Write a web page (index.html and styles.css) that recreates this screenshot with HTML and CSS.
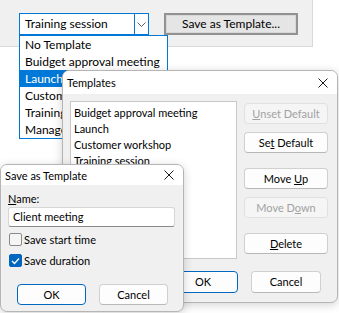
FILE: index.html
```html
<!DOCTYPE html>
<html lang="en">
<head>
    <meta charset="UTF-8">
    <title>Templates</title>
    <link rel="stylesheet" href="styles.css">
</head>
<body>

<div class="toolbar">
    <div class="combo">
        <span class="combo-text">Training session</span>
        <span class="combo-arrow">
            <svg width="9" height="5" viewBox="0 0 9 5"><path d="M0.5 0.5 L4.5 4.5 L8.5 0.5" fill="none" stroke="#606060" stroke-width="1"/></svg>
        </span>
    </div>
    <div class="classic-btn">Save as Template...</div>
</div>

<ul class="dropdown">
    <li>No Template</li>
    <li>Buidget approval meeting</li>
    <li class="selected">Launch</li>
    <li>Customer workshop</li>
    <li>Training session</li>
    <li>Manager meeting</li>
</ul>

<div class="dialog templates">
    <div class="titlebar">
        <span>Templates</span>
        <svg class="close" width="10" height="10" viewBox="0 0 10 10"><path d="M0.5 0.5 L9.5 9.5 M9.5 0.5 L0.5 9.5" stroke="#1a1a1a" stroke-width="1"/></svg>
    </div>
    <div class="dialog-body">
        <div class="tpl-main">
            <ul class="listbox">
                <li>Buidget approval meeting</li>
                <li>Launch</li>
                <li>Customer workshop</li>
                <li>Training session</li>
            </ul>
            <div class="side-buttons">
                <div class="btn disabled"><u>U</u>nset Default</div>
                <div class="btn">Se<u>t</u> Default</div>
                <div class="btn group">Move <u>U</u>p</div>
                <div class="btn disabled">Move D<u>o</u>wn</div>
                <div class="btn group"><u>D</u>elete</div>
            </div>
        </div>
        <div class="footer">
            <div class="btn wide default">OK</div>
            <div class="btn wide">Cancel</div>
        </div>
    </div>
</div>

<div class="dialog save">
    <div class="titlebar">
        <span>Save as Template</span>
        <svg class="close" width="10" height="10" viewBox="0 0 10 10"><path d="M0.5 0.5 L9.5 9.5 M9.5 0.5 L0.5 9.5" stroke="#1a1a1a" stroke-width="1"/></svg>
    </div>
    <div class="dialog-body">
        <div class="label"><u>N</u>ame:</div>
        <div class="textbox">Client meeting</div>
        <div class="check-row">
            <span class="checkbox"></span>
            <span>Save start time</span>
        </div>
        <div class="check-row">
            <span class="checkbox checked">
                <svg width="9" height="8" viewBox="0 0 9 8"><path d="M1 4 L3.5 6.5 L8 1.5" fill="none" stroke="#fff" stroke-width="1.3"/></svg>
            </span>
            <span>Save duration</span>
        </div>
        <div class="footer">
            <div class="btn wide default">OK</div>
            <div class="btn wide">Cancel</div>
        </div>
    </div>
</div>

</body>
</html>
```

FILE: styles.css
```css
* {
    box-sizing: border-box;
}

body {
    margin: 0;
    width: 339px;
    height: 313px;
    position: relative;
    overflow: hidden;
    background-color: #ffffff;
    font-family: Lato, "Noto Sans", sans-serif;
    font-size: 11px;
    color: #000000;
}

ul {
    list-style: none;
    margin: 0;
    padding: 0;
}

/* top strip with the combo box */
.toolbar {
    width: 313px;
    height: 47px;
    background-color: #f0f0f0;
    border-right: 1px solid #d9d9d9;
    border-bottom: 1px solid #d9d9d9;
    display: flex;
    align-items: flex-start;
    padding: 13px 0 0 19px;
}

.combo {
    width: 130px;
    height: 22px;
    background-color: #ffffff;
    border: 1px solid #0078d7;
    display: flex;
    font-size: 12px;
}

.combo-text {
    flex: 1;
    padding-left: 5px;
    line-height: 20px;
}

.combo-arrow {
    width: 14px;
    border-left: 1px solid #0078d7;
    display: flex;
    align-items: center;
    justify-content: center;
}

.classic-btn {
    width: 134px;
    height: 22px;
    margin-left: 15px;
    background-color: #e5e5e5;
    border: 2px solid #929292;
    box-shadow: inset 0 0 0 1px #d8d8d8;
    text-align: center;
    line-height: 18px;
    font-size: 12px;
}

/* open list of the combo box */
.dropdown {
    position: absolute;
    left: 19px;
    top: 35px;
    width: 149px;
    height: 104px;
    background-color: #ffffff;
    border: 1px solid #0078d7;
    font-size: 12px;
    overflow: hidden;
}

.dropdown li {
    height: 17px;
    line-height: 17px;
    padding-left: 5px;
    white-space: nowrap;
}

.dropdown .selected {
    background-color: #0078d7;
    color: #ffffff;
}

/* windows */
.dialog {
    position: absolute;
    background-color: #f0f0f0;
    border: 1px solid #b5b5b5;
    border-radius: 7px;
    overflow: hidden;
    box-shadow: 0 2px 10px rgba(0, 0, 0, 0.18);
}

.titlebar {
    background-color: #ffffff;
    display: flex;
    align-items: center;
    justify-content: space-between;
    padding: 0 9px 0 4px;
}

.templates {
    left: 62px;
    top: 70px;
    width: 276px;
    height: 233px;
}

.templates .titlebar {
    height: 23px;
}

.templates .dialog-body {
    padding: 7px 0 0 7px;
}

.tpl-main {
    display: flex;
}

.listbox {
    width: 167px;
    height: 158px;
    background-color: #ffffff;
    border: 1px solid #c8c8c8;
    padding: 3px 0 0 3px;
}

.listbox li {
    height: 16px;
    line-height: 16px;
}

.side-buttons {
    width: 84px;
    margin-left: 7px;
    padding-top: 2px;
    display: flex;
    flex-direction: column;
    gap: 8px;
}

.btn {
    height: 21px;
    background-color: #fdfdfd;
    border: 1px solid #d0d0d0;
    border-bottom-color: #b8b8b8;
    border-radius: 4px;
    text-align: center;
    line-height: 19px;
}

.btn.group {
    margin-top: 7px;
}

.btn.disabled {
    background-color: #f5f5f5;
    border-color: #e0e0e0;
    color: #a2a2a2;
}

.btn.wide {
    width: 70px;
    height: 22px;
    line-height: 20px;
}

.btn.default {
    border: 1px solid #0067c0;
    box-shadow: inset 0 0 0 1px #ffffff;
}

.footer {
    display: flex;
    gap: 13px;
}

.templates .footer {
    margin-top: 12px;
    padding-left: 98px;
}

.save {
    left: 0;
    top: 164px;
    width: 184px;
    height: 148px;
}

.save .titlebar {
    height: 20px;
}

.save .dialog-body {
    padding: 5px 8px 0 7px;
}

.label {
    height: 17px;
    line-height: 17px;
}

.textbox {
    height: 20px;
    background-color: #ffffff;
    border: 1px solid #d6d6d6;
    border-bottom-color: #8a8a8a;
    border-radius: 3px;
    padding-left: 4px;
    line-height: 18px;
}

.check-row {
    display: flex;
    align-items: center;
    gap: 2px;
    height: 17px;
    margin-top: 4px;
    padding-left: 1px;
}

.checkbox {
    width: 13px;
    height: 13px;
    border: 1px solid #8a8a8a;
    border-radius: 2px;
    background-color: #f5f5f5;
    display: flex;
    align-items: center;
    justify-content: center;
}

.checkbox.checked {
    background-color: #0067c0;
    border-color: #0067c0;
}

.save .footer {
    margin-top: 15px;
    padding-left: 9px;
}

.save .btn.wide {
    width: 69px;
    height: 21px;
    line-height: 19px;
}
```
